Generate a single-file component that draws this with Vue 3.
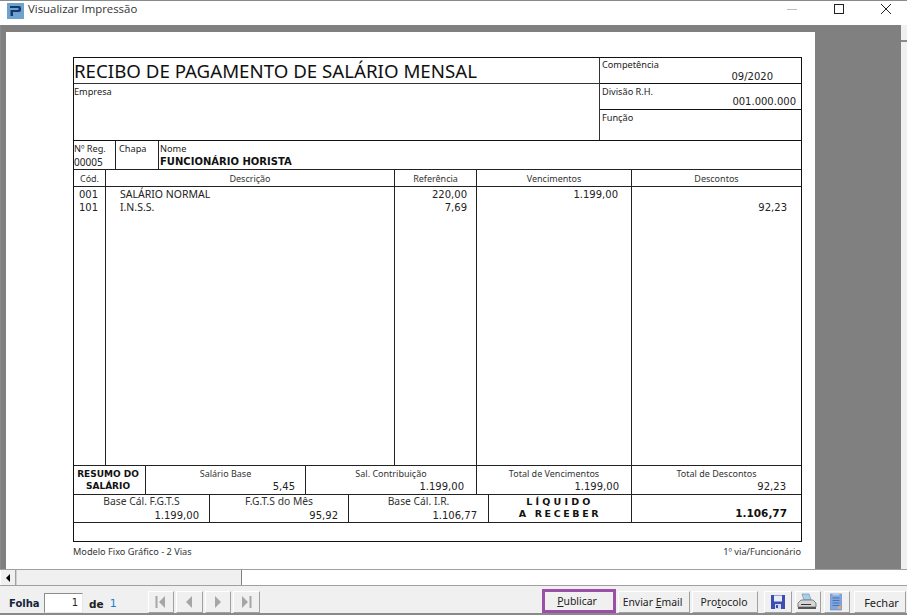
<script setup>
const items = [
  { cod: '001', desc: 'SALÁRIO NORMAL', ref: '220,00', venc: '1.199,00', dsc: '' },
  { cod: '101', desc: 'I.N.S.S.', ref: '7,69', venc: '', dsc: '92,23' }
]
</script>

<template>
  <div class="window">
    <header class="titlebar">
      <svg class="logo" width="17" height="16" viewBox="0 0 17 16">
        <rect width="17" height="16" fill="#6ea3cf" />
        <path d="M3 3h9a2 2 0 0 1 2 2v2a2 2 0 0 1-2 2H6v4H3.5V7H11.5V5H3z" fill="#123a6b" />
      </svg>
      <span class="title">Visualizar Impressão</span>
      <div class="controls">
        <svg width="12" height="12" viewBox="0 0 12 12"><path d="M1 6.5h10" stroke="#bbb" /></svg>
        <svg width="12" height="12" viewBox="0 0 12 12"><rect x="1.5" y="1.5" width="9" height="9" fill="none" stroke="#222" /></svg>
        <svg width="12" height="12" viewBox="0 0 12 12"><path d="M1 1l10 10M11 1L1 11" stroke="#222" fill="none" /></svg>
      </div>
    </header>

    <main class="viewer">
      <div class="canvas">
        <section class="page">
          <div class="receipt">
            <div class="top">
              <div class="top-left">
                <h1 class="doc-title">RECIBO DE PAGAMENTO DE SALÁRIO MENSAL</h1>
                <div class="label empresa">Empresa</div>
              </div>
              <div class="top-right">
                <div class="side side-a">
                  <div class="label">Competência</div>
                  <div class="value comp">09/2020</div>
                </div>
                <div class="side side-b">
                  <div class="label">Divisão R.H.</div>
                  <div class="value div">001.000.000</div>
                </div>
                <div class="side side-c">
                  <div class="label">Função</div>
                </div>
              </div>
            </div>

            <div class="row person">
              <div class="cell c-reg">
                <div class="label">Nº Reg.</div>
                <div class="label num">00005</div>
              </div>
              <div class="cell c-chapa"><div class="label">Chapa</div></div>
              <div class="cell c-nome">
                <div class="label">Nome</div>
                <div class="bold-name">FUNCIONÁRIO HORISTA</div>
              </div>
            </div>

            <div class="row head">
              <div class="col-cod">Cód.</div>
              <div class="col-desc">Descrição</div>
              <div class="col-ref">Referência</div>
              <div class="col-venc">Vencimentos</div>
              <div class="col-dsc">Descontos</div>
            </div>

            <div class="row body">
              <div class="col-cod body-col cod-col">
                <div v-for="i in items" :key="i.cod" class="line">{{ i.cod }}</div>
              </div>
              <div class="col-desc body-col desc-col">
                <div v-for="i in items" :key="i.cod" class="line">{{ i.desc }}</div>
              </div>
              <div class="col-ref body-col ref-col">
                <div v-for="i in items" :key="i.cod" class="line">{{ i.ref }}</div>
              </div>
              <div class="col-venc body-col venc-col">
                <div v-for="i in items" :key="i.cod" class="line">{{ i.venc }}</div>
              </div>
              <div class="col-dsc body-col dsc-col">
                <div v-for="i in items" :key="i.cod" class="line">{{ i.dsc }}</div>
              </div>
            </div>

            <div class="row resumo">
              <div class="cell r1 resumo-title">RESUMO DO<br />SALÁRIO</div>
              <div class="cell r2">
                <div class="cap">Salário Base</div>
                <div class="amt pr-salario">5,45</div>
              </div>
              <div class="cell r3">
                <div class="cap">Sal. Contribuição</div>
                <div class="amt pr-contrib">1.199,00</div>
              </div>
              <div class="cell r4">
                <div class="cap">Total de Vencimentos</div>
                <div class="amt pr-venc">1.199,00</div>
              </div>
              <div class="cell r5">
                <div class="cap">Total de Descontos</div>
                <div class="amt pr-dsc">92,23</div>
              </div>
            </div>

            <div class="row base">
              <div class="cell b1">
                <div class="cap">Base Cál. F.G.T.S</div>
                <div class="amt pr-b1">1.199,00</div>
              </div>
              <div class="cell b2">
                <div class="cap">F.G.T.S do Mês</div>
                <div class="amt pr-b2">95,92</div>
              </div>
              <div class="cell b3">
                <div class="cap">Base Cál. I.R.</div>
                <div class="amt pr-b3">1.106,77</div>
              </div>
              <div class="cell b4 liquido">
                <div class="liq-a">LÍQUIDO</div>
                <div>A RECEBER</div>
              </div>
              <div class="cell b5 total">1.106,77</div>
            </div>

            <div class="blank"></div>
          </div>

          <footer class="page-foot">
            <span>Modelo Fixo Gráfico - 2 Vias</span>
            <span>1º via/Funcionário</span>
          </footer>
        </section>
      </div>
      <div class="vscroll">
        <div class="v-btn"></div>
      </div>
    </main>

    <div class="hscroll">
      <div class="h-btn"><span class="tri"></span></div>
      <div class="h-thumb"></div>
      <div class="h-track"></div>
    </div>

    <nav class="toolbar">
      <span class="folha">Folha</span>
      <div class="page-input">1</div>
      <span class="de">de</span>
      <span class="of">1</span>

      <div class="nav-group">
        <button class="nav-btn" type="button">
          <svg width="12" height="14" viewBox="0 0 12 14"><path d="M1.5 1v12" stroke="#a6a6a6" stroke-width="2" /><path d="M10 1v12L4 7z" fill="#a6a6a6" /></svg>
        </button>
        <button class="nav-btn wide" type="button">
          <svg width="10" height="14" viewBox="0 0 10 14"><path d="M8 1v12L2 7z" fill="#a6a6a6" /></svg>
        </button>
        <button class="nav-btn" type="button">
          <svg width="10" height="14" viewBox="0 0 10 14"><path d="M2 1v12l6-6z" fill="#a6a6a6" /></svg>
        </button>
        <button class="nav-btn wide" type="button">
          <svg width="12" height="14" viewBox="0 0 12 14"><path d="M10.5 1v12" stroke="#a6a6a6" stroke-width="2" /><path d="M2 1v12l6-6z" fill="#a6a6a6" /></svg>
        </button>
      </div>

      <div class="actions">
        <button class="btn publicar" type="button"><u>P</u>ublicar</button>
        <button class="btn enviar" type="button">Enviar <u>E</u>mail</button>
        <button class="btn protocolo" type="button">Pro<u>t</u>ocolo</button>
        <button class="btn ico save" type="button">
          <svg width="16" height="16" viewBox="0 0 16 16">
            <path d="M1 1h14v14H1z" fill="#3c4fb0" />
            <rect x="4" y="1.500" width="8" height="6" fill="#e8edf8" />
            <rect x="5" y="10" width="6" height="5" fill="#d5daf0" />
            <rect x="6" y="11" width="2" height="3" fill="#3c4fb0" />
          </svg>
        </button>
        <button class="btn ico print" type="button">
          <svg width="20" height="18" viewBox="0 0 20 18">
            <path d="M5 1h7l2 6H7z" fill="#a9d0ea" stroke="#6f93ad" stroke-width=".7" />
            <path d="M1 10l3-3h12l3 3v4H1z" fill="#d6d6d6" stroke="#6b6b6b" stroke-width=".8" />
            <path d="M1 14h18v2H1z" fill="#555" />
            <path d="M4 11h10v1H4z" fill="#333" />
          </svg>
        </button>
        <button class="btn ico doc" type="button">
          <svg width="12" height="18" viewBox="0 0 12 18">
            <rect x=".5" y="1" width="11" height="16" fill="#7fa6dd" stroke="#6a8cc4" stroke-width=".7" />
            <rect x="2.500" y="0" width="7" height="2.500" fill="#b9cbe6" />
            <path d="M2.500 5h7M2.500 7.500h7M2.500 10h7M2.500 12.500h7" stroke="#4a72b5" />
            <path d="M8 13h3v3H8z" fill="#e6a66f" />
          </svg>
        </button>
        <button class="btn fechar" type="button">Fechar</button>
      </div>
    </nav>
  </div>
</template>

<style>
html, body { margin: 0; padding: 0; background: #f0f0f0; }
</style>

<style scoped>
* { box-sizing: border-box; }

.window {
  width: 907px;
  height: 615px;
  display: flex;
  flex-direction: column;
  overflow: hidden;
  background: #f0f0f0;
  border-top: 1px solid #8a8a8a;
  border-bottom: 2px solid #8a8a8a;
  font-family: "DejaVu Sans", sans-serif;
  color: #111;
}

/* title bar */
.titlebar {
  height: 24px;
  flex: none;
  background: #fff;
  display: flex;
  align-items: center;
  padding-left: 7px;
}
.logo { margin-top: -5px; }
.title {
  margin-left: 4px;
  margin-top: -10px;
  font: 11.4px "Open Sans", sans-serif;
  color: #333;
}
.controls {
  margin-left: auto;
  margin-top: -8px;
  margin-right: 15px;
  display: flex;
  gap: 35px;
}

/* viewer */
.viewer {
  height: 544px;
  flex: none;
  display: flex;
  background: #808080;
  border-left: 1px solid #8a8a8a;
}
.canvas {
  flex: 1;
  padding: 7px 0 0 5px;
  min-width: 0;
}
.vscroll {
  width: 6px;
  background: #f0f0f0;
  flex: none;
}
.v-btn {
  height: 17px;
  border-bottom: 2px solid #8a8a8a;
}

.page {
  width: 809px;
  height: 537px;
  background: #fff;
  padding: 25px 14px 0 67px;
}

.receipt {
  width: 729px;
  border: 1px solid #111;
  color: #222;
}

.top {
  display: flex;
  height: 83px;
  border-bottom: 1px solid #111;
}
.top-left {
  width: 526px;
  border-right: 1px solid #333;
}
.doc-title {
  margin: 0;
  height: 26px;
  font: 400 18.7px/26px "Noto Sans", sans-serif;
  padding-left: 0;
  color: #111;
  border-bottom: 1px solid #333;
  white-space: nowrap;
}
.top-right { flex: 1; }
.side {
  border-bottom: 1px solid #111;
  padding: 1px 4px 0 2px;
}
.side-a { height: 26px; }
.side-b { height: 26px; padding-top: 2px; }
.side-c { height: 29px; border-bottom: 0; padding-top: 2px; }

.label {
  font: 9.2px/12px "Noto Sans", sans-serif;
  color: #222;
}
.empresa { padding: 2px 0 0 0; }
.value {
  font: 10px/12px "DejaVu Sans", sans-serif;
  text-align: right;
  color: #222;
}
.comp { padding-right: 24px; }
.div { padding-right: 1px; margin-top: -2px; }

.row { display: flex; }
.cell { border-right: 1px solid #222; }
.cell:last-child { border-right: 0; }

.person {
  height: 29px;
  border-bottom: 1px solid #222;
}
.c-reg { width: 42px; padding: 2px 0 0 0; }
.c-chapa { width: 43px; padding: 2px 0 0 3px; }
.c-nome { flex: 1; padding: 2px 0 0 1px; }
.num { font-size: 10px; margin-top: 1px; }
.bold-name {
  font: 700 10px/13px "DejaVu Sans", sans-serif;
  color: #111;
}

.col-cod { width: 32px; border-right: 1px solid #222; }
.col-desc { width: 289px; border-right: 1px solid #222; }
.col-ref { width: 82px; border-right: 1px solid #222; }
.col-venc { width: 155px; border-right: 1px solid #222; }
.col-dsc { flex: 1; }

.head {
  height: 17px;
  border-bottom: 1px solid #222;
  font: 9px/17px "Noto Sans", sans-serif;
  text-align: center;
  color: #333;
}

.body {
  height: 279px;
  border-bottom: 1px solid #222;
  font: 10px/13px "DejaVu Sans", sans-serif;
  color: #222;
  padding-top: 0;
}
.body-col { padding-top: 1px; }
.line { height: 13px; white-space: nowrap; }
.cod-col { padding-left: 5px; }
.desc-col { padding-left: 14px; font-family: "Noto Sans", sans-serif; font-size: 10.5px; }
.ref-col { text-align: right; padding-right: 9px; }
.venc-col { text-align: right; padding-right: 13px; }
.dsc-col { text-align: right; padding-right: 14px; }

.resumo {
  height: 29px;
  border-bottom: 1px solid #222;
}
.r1 { width: 72px; }
.r2 { width: 160px; }
.r3 { width: 171px; }
.r4 { width: 155px; }
.r5 { flex: 1; }
.resumo-title {
  font: 700 9px/12px "DejaVu Sans", sans-serif;
  text-align: center;
  padding: 2px 3px 0 0;
  color: #111;
}
.cap {
  font: 9px/13px "Noto Sans", sans-serif;
  text-align: center;
  color: #333;
}
.amt {
  font: 10px/13px "DejaVu Sans", sans-serif;
  text-align: right;
  color: #222;
}
.resumo .cell .cap { padding-top: 1px; }
.pr-salario { padding-right: 10px; }
.pr-contrib { padding-right: 12px; }
.pr-venc { padding-right: 12px; }
.pr-dsc { padding-right: 15px; }

.base {
  height: 28px;
  border-bottom: 1px solid #222;
}
.b1 { width: 136px; }
.b2 { width: 139px; }
.b3 { width: 140px; }
.b4 { width: 143px; }
.b5 { flex: 1; }
.base .cap { font-size: 10.3px; height: 14px; }
.pr-b1 { padding-right: 10px; }
.pr-b2 { padding-right: 10px; }
.pr-b3 { padding-right: 11px; }
.liquido {
  font: 700 9.5px/12px "DejaVu Sans", sans-serif;
  letter-spacing: 2.6px;
  text-align: center;
  padding-top: 1px;
  color: #111;
}
.liq-a { letter-spacing: 3.2px; }
.total {
  font: 700 10.5px/18px "DejaVu Sans", sans-serif;
  text-align: right;
  padding: 9px 14px 0 0;
  color: #111;
}

.blank { height: 18px; }

.page-foot {
  display: flex;
  justify-content: space-between;
  padding-top: 3px;
  font: 9.2px/14px "Noto Sans", sans-serif;
  color: #333;
}

/* horizontal scroll */
.hscroll {
  height: 17px;
  flex: none;
  display: flex;
  background: #fff;
  border-top: 1px solid #a0a0a0;
  border-bottom: 1px solid #a0a0a0;
  padding-left: 1px;
}
.h-btn {
  width: 15px;
  background: #f0f0f0;
  border-right: 1px solid #a0a0a0;
  display: flex;
  align-items: center;
  justify-content: center;
}
.tri {
  width: 0;
  height: 0;
  border: 4px solid transparent;
  border-left: 0;
  border-right: 4px solid #000;
}
.h-thumb {
  width: 226px;
  background: #f0f0f0;
  border-right: 1px solid #808080;
  border-left: 1px solid #d0d0d0;
}
.h-track { flex: 1; }

/* toolbar */
.toolbar {
  flex: 1;
  display: flex;
  align-items: flex-end;
  padding: 0 1px 0 9px;
  background: #f0f0f0;
  font: 11px "Noto Sans", sans-serif;
  color: #222;
}
.folha {
  font: 700 10px/16px "DejaVu Sans", sans-serif;
  color: #14223a;
  width: 35px;
  margin-bottom: 1px;
}
.page-input {
  width: 39px;
  height: 20px;
  background: #fff;
  border: 1px solid;
  border-color: #8c8c8c #e8e8e8 #e8e8e8 #8c8c8c;
  text-align: right;
  padding-right: 4px;
  font: 10px/18px "DejaVu Sans", sans-serif;
}
.de {
  font: 700 10.5px/16px "DejaVu Sans", sans-serif;
  margin-left: 6px;
  margin-bottom: 1px;
}
.of {
  font: 11px/16px "DejaVu Sans", sans-serif;
  color: #1a7fd0;
  margin-left: 6px;
  margin-bottom: 1px;
}

.nav-group {
  display: flex;
  gap: 2px;
  margin-left: 31px;
}
.nav-btn {
  width: 26px;
  height: 22px;
  padding: 0;
  display: flex;
  align-items: center;
  justify-content: center;
  background: #f0f0f0;
  border: 1px solid;
  border-color: #fff #a0a0a0 #a0a0a0 #fff;
}
.nav-btn.wide { width: 27px; }

.actions {
  margin-left: auto;
  display: flex;
  align-items: flex-end;
}
.btn {
  height: 22px;
  padding: 0;
  display: flex;
  align-items: center;
  justify-content: center;
  background: #f0f0f0;
  border: 1px solid;
  border-color: #fff #a0a0a0 #a0a0a0 #fff;
  font: 10.4px "Noto Sans", sans-serif;
  color: #222;
  white-space: pre;
}
.publicar {
  width: 74px;
  height: 24px;
  border: 3px solid #9b4fa8;
  padding-right: 4px;
}
.enviar { width: 72px; margin-left: 2px; padding-right: 3px; }
.protocolo { width: 66px; margin-left: 2px; padding-right: 2px; }
.ico { width: 28px; }
.save { margin-left: 6px; padding-right: 1px; }
.print { width: 26px; margin-left: 3px; padding-right: 2px; }
.doc { width: 26px; margin-left: 3px; padding-right: 2px; }
.fechar { width: 52px; margin-left: 4px; font-size: 11px; padding-left: 3px; }
</style>
